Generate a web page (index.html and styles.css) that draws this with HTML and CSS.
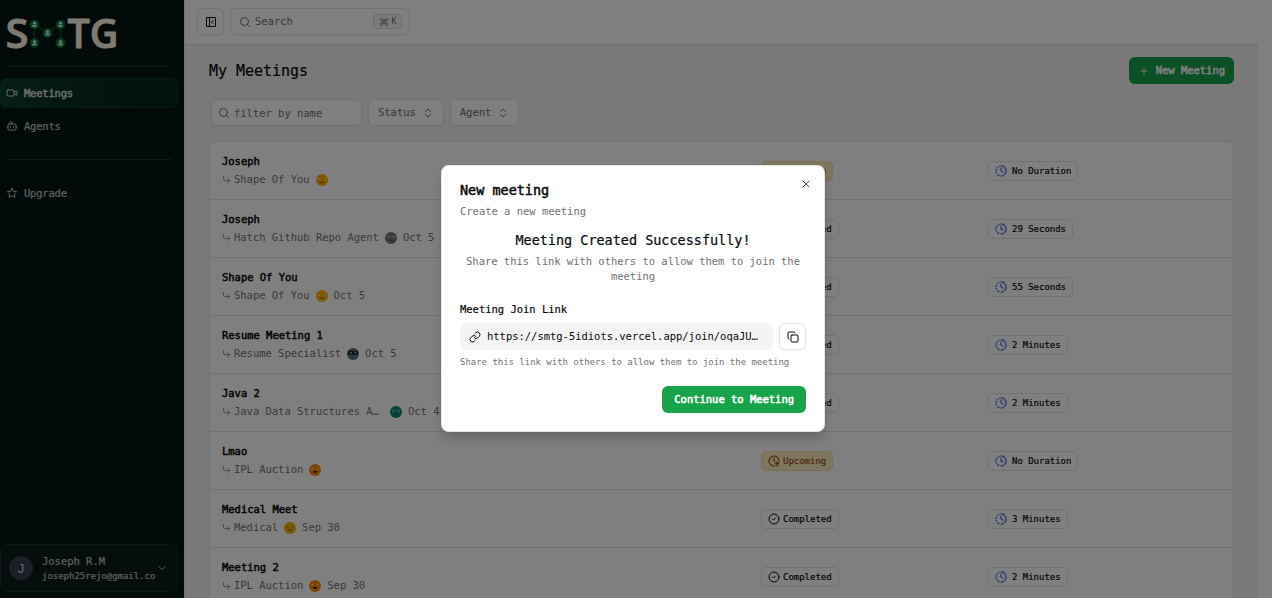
FILE: index.html
```html
<!DOCTYPE html>
<html lang="en">
<head>
<meta charset="utf-8">
<title>My Meetings</title>
<link rel="stylesheet" href="styles.css">
</head>
<body>
<svg class="defs" width="0" height="0">
  <symbol id="search" viewBox="0 0 24 24"><circle cx="11" cy="11" r="8"/><path d="m21 21-4.300-4.300"/></symbol>
  <symbol id="panel" viewBox="0 0 24 24"><rect x="3" y="3" width="18" height="18" rx="1"/><path d="M9 3v18M16 15l-3-3 3-3"/></symbol>
  <symbol id="video" viewBox="0 0 24 24"><path d="m16 13 5.2 3.5a.5.5 0 0 0 .8-.4V7.9a.5.5 0 0 0-.8-.4L16 10.500"/><rect x="2" y="6" width="14" height="12" rx="2"/></symbol>
  <symbol id="bot" viewBox="0 0 24 24"><path d="M12 8V4H8"/><rect x="4" y="8" width="16" height="12" rx="2"/><path d="M2 14h2M20 14h2M15 13v2M9 13v2"/></symbol>
  <symbol id="star" viewBox="0 0 24 24"><path d="M12 2.500l2.900 6 6.600.9-4.800 4.600 1.200 6.600L12 17.400l-5.900 3.200 1.200-6.600L2.500 9.400l6.600-.9z"/></symbol>
  <symbol id="updown" viewBox="0 0 24 24"><path d="m7 15 5 5 5-5M7 9l5-5 5 5"/></symbol>
  <symbol id="down" viewBox="0 0 24 24"><path d="m6 9 6 6 6-6"/></symbol>
  <symbol id="plus" viewBox="0 0 24 24"><path d="M5 12h14M12 5v14"/></symbol>
  <symbol id="corner" viewBox="0 0 24 24"><path d="m15 10 5 5-5 5"/><path d="M4 4v7a4 4 0 0 0 4 4h12"/></symbol>
  <symbol id="check" viewBox="0 0 24 24"><circle cx="12" cy="12" r="10"/><path d="m9 12 2 2 4-4"/></symbol>
  <symbol id="clockup" viewBox="0 0 24 24"><path d="M13.200 22a10 10 0 1 1 8.800-8.800M12 6v6l1.600.8M18 22v-7M14.500 18l3.500-3.500 3.500 3.500"/></symbol>
  <symbol id="clockfade" viewBox="0 0 24 24"><path d="M12 2a10 10 0 0 1 7.400 16.800M16.800 20.800A10 10 0 0 1 12 22M12 6v6l4 2M2.500 8.900a10 10 0 0 0-.4 1.800M2.200 14.200a10 10 0 0 0 .7 2M4.600 5.200l-.5.6M8.600 2.600l-.8.4M5.400 19.500a10 10 0 0 0 2.600 1.700"/></symbol>
  <symbol id="link" viewBox="0 0 24 24"><path d="M10 13a5 5 0 0 0 7.540.540l3-3a5 5 0 0 0-7.070-7.070l-1.720 1.710"/><path d="M14 11a5 5 0 0 0-7.540-.540l-3 3a5 5 0 0 0 7.070 7.070l1.710-1.710"/></symbol>
  <symbol id="copy" viewBox="0 0 24 24"><rect x="8" y="8" width="14" height="14" rx="2"/><path d="M4 16a2 2 0 0 1-2-2V4a2 2 0 0 1 2-2h10a2 2 0 0 1 2 2"/></symbol>
  <symbol id="close" viewBox="0 0 24 24"><path d="M18 6 6 18M6 6l12 12"/></symbol>
  <symbol id="command" viewBox="0 0 24 24"><path d="M15 6v12a3 3 0 1 0 3-3H6a3 3 0 1 0 3 3V6a3 3 0 1 0-3 3h12a3 3 0 1 0-3-3"/></symbol>
  <symbol id="flat" viewBox="0 0 12 12"><circle class="face" cx="6" cy="6" r="6"/><path class="eyes" d="M2.300 5h1.600M8.100 5h1.600"/><path class="mouth" d="M3.500 8.300h5"/></symbol>
  <symbol id="owl" viewBox="0 0 12 12"><circle class="face" cx="6" cy="6" r="6"/><g class="ring"><circle cx="3.500" cy="4.700" r="1.100"/><circle cx="8.500" cy="4.700" r="1.100"/></g><path class="mouth" d="M4.200 8.400h3.600"/></symbol>
  <symbol id="shades" viewBox="0 0 12 12"><circle class="face" cx="6" cy="6" r="6"/><path d="M1 3.200h10v3.200H1z" fill="#10161a" stroke="none"/><g class="ring"><circle cx="3.800" cy="4.700" r=".5"/><circle cx="8.200" cy="4.700" r=".5"/></g></symbol>
  <symbol id="smile" viewBox="0 0 12 12"><circle class="face" cx="6" cy="6" r="6"/><path class="eyes" d="M2.600 4.500h1.400M8 4.500h1.400"/><path d="M4 7h4a2 2 0 0 1-4 0z" fill="#38260c" stroke="none"/></symbol>
  <symbol id="plain" viewBox="0 0 12 12"><circle class="face" cx="6" cy="6" r="6"/><path class="mouth" d="M2.800 5h1.500M7.700 5h1.500M4.200 8q1.800.8 3.600 0"/></symbol>
  <symbol id="user" viewBox="0 0 8 8"><circle cx="4" cy="4" r="3.600" fill="#12803e" stroke="#155c2b" stroke-width=".8"/><circle cx="4" cy="2.900" r="1.100" fill="#dff" stroke="none"/><path d="M2 5.800q0-1.600 2-1.600t2 1.600z" fill="#dff" stroke="none"/></symbol>
</svg>
<div class="app">
  <aside class="sidebar">
    <svg class="logo" viewBox="0 0 120 50">
      <g class="letters"><text x="5.500" y="47.500" textLength="23" lengthAdjust="spacingAndGlyphs">S</text><text x="67.500" y="47.500" textLength="51" lengthAdjust="spacingAndGlyphs">TG</text></g>
      <path class="wires" d="M34.500 43V24l13 9 13-9v19"/>
      <use href="#user" x="29.500" y="19.500" width="10" height="10"/><use href="#user" x="55.500" y="19.500" width="10" height="10"/><use href="#user" x="42.500" y="28" width="10" height="10"/><use href="#user" x="29.500" y="38" width="10" height="10"/><use href="#user" x="55.500" y="38" width="10" height="10"/>
    </svg>
    <hr class="rule">
    <nav class="nav">
      <a class="item active"><svg class="i12"><use href="#video"/></svg>Meetings</a>
      <a class="item"><svg class="i12"><use href="#bot"/></svg>Agents</a>
    </nav>
    <hr class="rule">
    <nav class="nav upgrade"><a class="item"><svg class="i12"><use href="#star"/></svg>Upgrade</a></nav>
    <div class="account">
      <span class="initial">J</span>
      <div class="who"><span>Joseph R.M</span><small>joseph25rejo@gmail.co</small></div>
      <svg class="i12"><use href="#down"/></svg>
    </div>
  </aside>
  <main class="main">
    <header class="topbar">
      <button class="box toggle"><svg class="i12"><use href="#panel"/></svg></button>
      <div class="box searchbox"><svg class="i12"><use href="#search"/></svg><span>Search</span><kbd class="kbd"><svg><use href="#command"/></svg>K</kbd></div>
    </header>
    <section class="content">
      <div class="heading"><h1>My Meetings</h1><button class="primary"><svg class="i12"><use href="#plus"/></svg>New Meeting</button></div>
      <div class="filters">
        <div class="box filter-name"><svg class="i12"><use href="#search"/></svg><span>filter by name</span></div>
        <div class="box select">Status<svg class="i12"><use href="#updown"/></svg></div>
        <div class="box select">Agent<svg class="i12"><use href="#updown"/></svg></div>
      </div>
      <div class="table">
        <div class="row"><div><b>Joseph</b><p><svg class="i9"><use href="#corner"/></svg><span>Shape Of You</span><svg class="avatar amber"><use href="#flat"/></svg></p></div><div><span class="badge upcoming"><svg class="i12"><use href="#clockup"/></svg><span>Upcoming</span></span></div><div><span class="badge time"><svg class="i12"><use href="#clockfade"/></svg><span>No Duration</span></span></div></div>
        <div class="row"><div><b>Joseph</b><p><svg class="i9"><use href="#corner"/></svg><span>Hatch Github Repo Agent</span><svg class="avatar gray"><use href="#owl"/></svg><span>Oct 5</span></p></div><div><span class="badge"><svg class="i12"><use href="#check"/></svg><span>Completed</span></span></div><div><span class="badge time"><svg class="i12"><use href="#clockfade"/></svg><span>29 Seconds</span></span></div></div>
        <div class="row"><div><b>Shape Of You</b><p><svg class="i9"><use href="#corner"/></svg><span>Shape Of You</span><svg class="avatar amber"><use href="#flat"/></svg><span>Oct 5</span></p></div><div><span class="badge"><svg class="i12"><use href="#check"/></svg><span>Completed</span></span></div><div><span class="badge time"><svg class="i12"><use href="#clockfade"/></svg><span>55 Seconds</span></span></div></div>
        <div class="row"><div><b>Resume Meeting 1</b><p><svg class="i9"><use href="#corner"/></svg><span>Resume Specialist</span><svg class="avatar slate"><use href="#shades"/></svg><span>Oct 5</span></p></div><div><span class="badge"><svg class="i12"><use href="#check"/></svg><span>Completed</span></span></div><div><span class="badge time"><svg class="i12"><use href="#clockfade"/></svg><span>2 Minutes</span></span></div></div>
        <div class="row"><div><b>Java 2</b><p><svg class="i9"><use href="#corner"/></svg><span class="clip">Java Data Structures A…</span><svg class="avatar teal"><use href="#owl"/></svg><span>Oct 4</span></p></div><div><span class="badge"><svg class="i12"><use href="#check"/></svg><span>Completed</span></span></div><div><span class="badge time"><svg class="i12"><use href="#clockfade"/></svg><span>2 Minutes</span></span></div></div>
        <div class="row"><div><b>Lmao</b><p><svg class="i9"><use href="#corner"/></svg><span>IPL Auction</span><svg class="avatar orange"><use href="#smile"/></svg></p></div><div><span class="badge upcoming"><svg class="i12"><use href="#clockup"/></svg><span>Upcoming</span></span></div><div><span class="badge time"><svg class="i12"><use href="#clockfade"/></svg><span>No Duration</span></span></div></div>
        <div class="row"><div><b>Medical Meet</b><p><svg class="i9"><use href="#corner"/></svg><span>Medical</span><svg class="avatar yellow"><use href="#plain"/></svg><span>Sep 30</span></p></div><div><span class="badge"><svg class="i12"><use href="#check"/></svg><span>Completed</span></span></div><div><span class="badge time"><svg class="i12"><use href="#clockfade"/></svg><span>3 Minutes</span></span></div></div>
        <div class="row"><div><b>Meeting 2</b><p><svg class="i9"><use href="#corner"/></svg><span>IPL Auction</span><svg class="avatar orange"><use href="#smile"/></svg><span>Sep 30</span></p></div><div><span class="badge"><svg class="i12"><use href="#check"/></svg><span>Completed</span></span></div><div><span class="badge time"><svg class="i12"><use href="#clockfade"/></svg><span>2 Minutes</span></span></div></div>
      </div>
    </section>
  </main>
</div>
<div class="overlay">
  <div class="dialog">
    <svg class="i12 close"><use href="#close"/></svg>
    <h2>New meeting</h2>
    <p class="desc">Create a new meeting</p>
    <div class="success"><h3>Meeting Created Successfully!</h3><p>Share this link with others to allow them to join the meeting</p></div>
    <label class="label">Meeting Join Link</label>
    <div class="linkrow"><div class="url"><svg class="i12"><use href="#link"/></svg><span>https://smtg-5idiots.vercel.app/join/oqaJU…</span></div><button class="box copy"><svg class="i12"><use href="#copy"/></svg></button></div>
    <p class="hint">Share this link with others to allow them to join the meeting</p>
    <div class="actions"><button class="primary">Continue to Meeting</button></div>
  </div>
</div>
</body>
</html>
```
FILE: styles.css
```css
* { box-sizing: border-box; margin: 0; padding: 0; }
body { font: 10.5px/15px "DejaVu Sans Mono", monospace; letter-spacing: -.002em; color: #0a0a0a; background: #fff; height: 598px; overflow: hidden; position: relative; }
button { font: inherit; border: 0; letter-spacing: inherit; }
svg { fill: none; stroke: currentColor; stroke-width: 2; stroke-linecap: round; stroke-linejoin: round; flex: none; }
.defs { position: absolute; }
.i12 { width: 12px; height: 12px; }
.i9 { width: 9px; height: 9px; }
.app { display: flex; height: 598px; }

.sidebar { width: 184px; background: #041712; color: #bcc3c0; display: flex; flex-direction: column; padding: 0 6px 6px 0; }
.logo { width: 120px; height: 50px; display: block; overflow: visible; }
.letters { font: 600 40px "Open Sans", sans-serif; fill: #fff4e6; stroke: #fff4e6; stroke-width: .8; letter-spacing: 0; }
.wires { stroke: #1e7a35; stroke-width: .9; stroke-dasharray: 2 1.5; }
.rule { border: 0; height: 1px; background: #18302a; margin: 16px 6px 11px 5px; }
.nav { display: flex; flex-direction: column; gap: 3px; }
.item { display: flex; align-items: center; gap: 6px; height: 30px; padding-left: 5px; border: 1px solid transparent; border-radius: 6px; letter-spacing: -.2px; -webkit-text-stroke: .2px; }
.item.active { background: linear-gradient(90deg, #0b3d2f, #08291f 50%, #07231c); border-color: #0e3a2e; -webkit-text-stroke: .5px; color: #d4dad8; }
.nav + .rule { margin: 18px 6px 18px 5px; }
.account { margin-top: auto; height: 48px; border: 1px solid #1b2e2b; border-radius: 8px; background: #0b1c1a; display: flex; align-items: center; padding: 0 9px 0 8px; gap: 9px; }
.initial { width: 24px; height: 24px; border-radius: 50%; background: #363e4c; color: #ccd2d8; font: 13px/25px "Liberation Sans", sans-serif; text-align: center; flex: none; }
.who { display: flex; flex-direction: column; width: 115px; margin-right: -8px; -webkit-text-stroke: .2px; }
.who small { font-size: 9px; line-height: 13px; white-space: nowrap; padding-top: 1px; margin-bottom: -1px; }

.main { width: 1074px; background: #f3f3f3; border-left: 1px solid #e5e5e5; display: flex; flex-direction: column; overflow: hidden; }
.topbar { height: 45px; flex: none; background: #fff; border-bottom: 1px solid #e0e0e0; display: flex; align-items: flex-start; gap: 6px; padding: 8px 12px; }
.box { height: 27px; border: 1px solid #e5e5e5; border-radius: 6px; background: #fff; display: flex; align-items: center; box-shadow: 0 1px 2px #0000000d; color: #737373; }
.toggle { width: 27px; justify-content: center; color: #0a0a0a; }
.searchbox { width: 180px; padding: 0 7px 0 8px; gap: 4px; }
.kbd { margin-left: auto; width: 29px; height: 15px; border: 1px solid #dcdcdc; border-radius: 3px; background: #f5f5f5; display: flex; align-items: center; justify-content: center; gap: 3px; font: 8px "DejaVu Sans Mono", monospace; }
.kbd svg { width: 10px; height: 10px; }
.content { padding: 12px 24px; flex: none; }
.heading { display: flex; justify-content: space-between; align-items: center; height: 27px; }
h1 { font-size: 15px; font-weight: normal; -webkit-text-stroke: .2px; padding-top: 1px; }
.primary { height: 27px; border-radius: 6px; background: #17a34a; color: #fff; -webkit-text-stroke: .55px; display: flex; align-items: center; gap: 6px; padding: 0 9px; }
.primary .i12 { stroke-width: 1.6; }
.filters { display: flex; gap: 6px; margin: 15px 0 15px 2px; }
.filter-name { width: 151px; padding-left: 6px; gap: 4px; }
.filter-name span { padding-top: 1px; }
.select { padding: 0 9px; gap: 6px; -webkit-text-stroke: .1px; }
.table { border: 1px solid #e2e2e2; border-radius: 7px; background: #fff; }
.row { display: grid; grid-template-columns: 539px 227px 1fr; align-items: center; height: 58px; padding-left: 12px; border-bottom: 1px solid #e2e2e2; }
.row b { display: block; margin-bottom: 3px; font-weight: normal; -webkit-text-stroke: .5px; }
.row p { display: flex; align-items: center; color: #737373; }
.row .i9 { margin-right: 3px; }
.avatar { width: 12px; height: 12px; margin: 0 6px; stroke-width: 1; }
.clip { width: 150px; white-space: nowrap; }
.face { fill: var(--face); stroke: none; }
.eyes { stroke: #ffe8a8; stroke-width: 1.3; stroke-linecap: butt; }
.mouth { stroke: #6b4a0c; stroke-width: .8; stroke-linecap: butt; }
.ring { fill: #222; stroke: #e8e8e8; stroke-width: .7; }
.amber { --face: #ffb300; }
.gray { --face: #757575; }
.slate { --face: #546e7a; }
.teal { --face: #00897b; }
.orange { --face: #fb8c00; }
.yellow { --face: #f0b400; }
.badge { display: inline-flex; align-items: center; height: 20px; padding: 0 6px; gap: 3px; border: 1px solid #e5e5e5; border-radius: 5px; font-size: 9px; letter-spacing: -.02px; -webkit-text-stroke: .2px; vertical-align: middle; }
.badge span { padding-top: 1px; }
.time { gap: 5px; }
.time svg { color: #4b6ddd; stroke-width: 2.5; }
.upcoming { background: #feedc0; border-color: #f5dfa6; color: #925016; }
.upcoming svg { stroke-width: 2.3; }

.overlay { position: absolute; inset: 0; background: #00000080; }
.dialog { position: absolute; left: 441px; top: 165px; width: 384px; height: 267px; background: #fff; border: 1px solid #e5e5e5; border-radius: 7.5px; padding: 18px; box-shadow: 0 8px 12px -2px #0003; }
.close { position: absolute; right: 12px; top: 12px; color: #4a4a4a; }
h2 { font-size: 13.5px; line-height: 14px; margin: -1px 0 7px; font-weight: normal; -webkit-text-stroke: .5px; }
.desc { color: #737373; }
.success { text-align: center; margin-top: 11px; }
h3 { font-size: 13.5px; line-height: 21px; font-weight: normal; -webkit-text-stroke: .2px; }
.success p { color: #737373; margin-top: 3px; }
.label { display: block; margin-top: 18px; -webkit-text-stroke: .2px; }
.linkrow { display: flex; gap: 6px; margin-top: 6px; }
.url { flex: 1; min-width: 0; height: 27px; border-radius: 6px; background: #f4f4f4; display: flex; align-items: center; gap: 6px; padding: 0 9px; }
.url span { white-space: nowrap; }
.copy { width: 27px; justify-content: center; color: #0a0a0a; }
.hint { font-size: 9px; line-height: 12px; color: #737373; margin-top: 6px; white-space: nowrap; }
.actions { display: flex; justify-content: flex-end; margin-top: 18px; }
.actions .primary { padding: 0 12px; }
```
